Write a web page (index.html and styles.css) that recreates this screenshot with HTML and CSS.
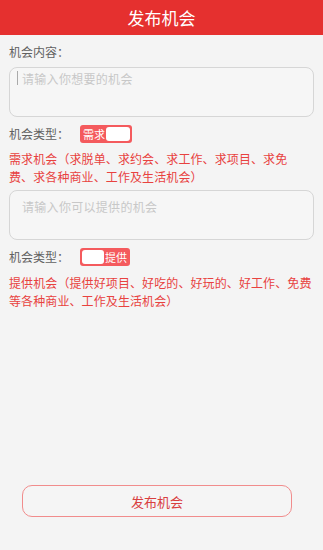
FILE: index.html
```html
<!DOCTYPE html>
<html lang="zh-CN">
<head>
<meta charset="utf-8">
<title>发布机会</title>
<link rel="stylesheet" href="styles.css">
</head>
<body>
<div class="page">
  <header class="topbar">发布机会</header>
  <main class="content">
    <div class="label">机会内容：</div>
    <div class="field"><span class="caret"></span><span class="placeholder">请输入你想要的机会</span></div>
    <div class="type-row">
      <span class="label">机会类型：</span>
      <span class="toggle"><span class="toggle-text">需求</span><span class="knob"></span></span>
    </div>
    <p class="desc">需求机会（求脱单、求约会、求工作、求项目、求免<br>费、求各种商业、工作及生活机会）</p>
    <div class="field field-2"><span class="placeholder">请输入你可以提供的机会</span></div>
    <div class="type-row">
      <span class="label">机会类型：</span>
      <span class="toggle toggle-right"><span class="knob"></span><span class="toggle-text">提供</span></span>
    </div>
    <p class="desc desc-2">提供机会（提供好项目、好吃的、好玩的、好工作、免费<br>等各种商业、工作及生活机会）</p>
  </main>
  <footer class="footer">
    <button class="submit">发布机会</button>
  </footer>
</div>
</body>
</html>
```

FILE: styles.css
```css
* { box-sizing: border-box; }
html, body {
  margin: 0;
  padding: 0;
  background: #f4f4f4;
  font-family: "Noto Sans CJK SC", "Noto Sans", sans-serif;
}
.page {
  height: 550px;
  display: flex;
  flex-direction: column;
}
.topbar {
  height: 35px;
  background: #e5302f;
  color: #fff;
  font-size: 17px;
  line-height: 36px;
  text-align: center;
}
.content {
  padding: 0 9px;
}
.label {
  font-size: 12px;
  line-height: 16px;
  color: #616161;
}
.content > .label {
  margin-top: 9px;
}
.field {
  margin-top: 7px;
  height: 50px;
  border: 1px solid #d6d6d6;
  border-radius: 8px;
  background: #f6f6f6;
  padding: 3px 0 0 12px;
  display: flex;
  align-items: flex-start;
  position: relative;
}
.caret {
  position: absolute;
  left: 7px;
  top: 3px;
  width: 1px;
  height: 14px;
  background: #aaa;
}
.placeholder {
  font-size: 12px;
  line-height: 16px;
  color: #c8c8c8;
  letter-spacing: 0.3px;
}
.field-2 {
  margin-top: 5px;
  padding-top: 8px;
}
.type-row {
  margin-top: 8px;
  display: flex;
  align-items: center;
  height: 18px;
}
.type-row .label {
  width: 71px;
}
.toggle {
  width: 52px;
  height: 18px;
  background: #f45a5d;
  border-radius: 3px;
  display: flex;
  align-items: center;
  padding: 2px;
}
.toggle-text {
  color: #fff;
  font-size: 11px;
  line-height: 14px;
  width: 24px;
  text-align: center;
}
.knob {
  flex: 1;
  height: 14px;
  background: #fff;
  border-radius: 3px;
}
.toggle-right {
  width: 50px;
}
.desc {
  margin: 7px 0 0;
  font-size: 12px;
  line-height: 17.5px;
  color: #e8423f;
  letter-spacing: 0.1px;
  white-space: nowrap;
}
.desc-2 {
  margin-top: 8px;
}
.footer {
  margin-top: auto;
  padding: 0 31px 33px 22px;
}
.submit {
  display: block;
  width: 100%;
  height: 32px;
  border: 1px solid #f18c8c;
  border-radius: 10px;
  background: #f5f5f5;
  color: #d9403f;
  font-family: "Noto Sans CJK SC", "Noto Sans", sans-serif;
  font-size: 13px;
  padding: 0;
}
```
